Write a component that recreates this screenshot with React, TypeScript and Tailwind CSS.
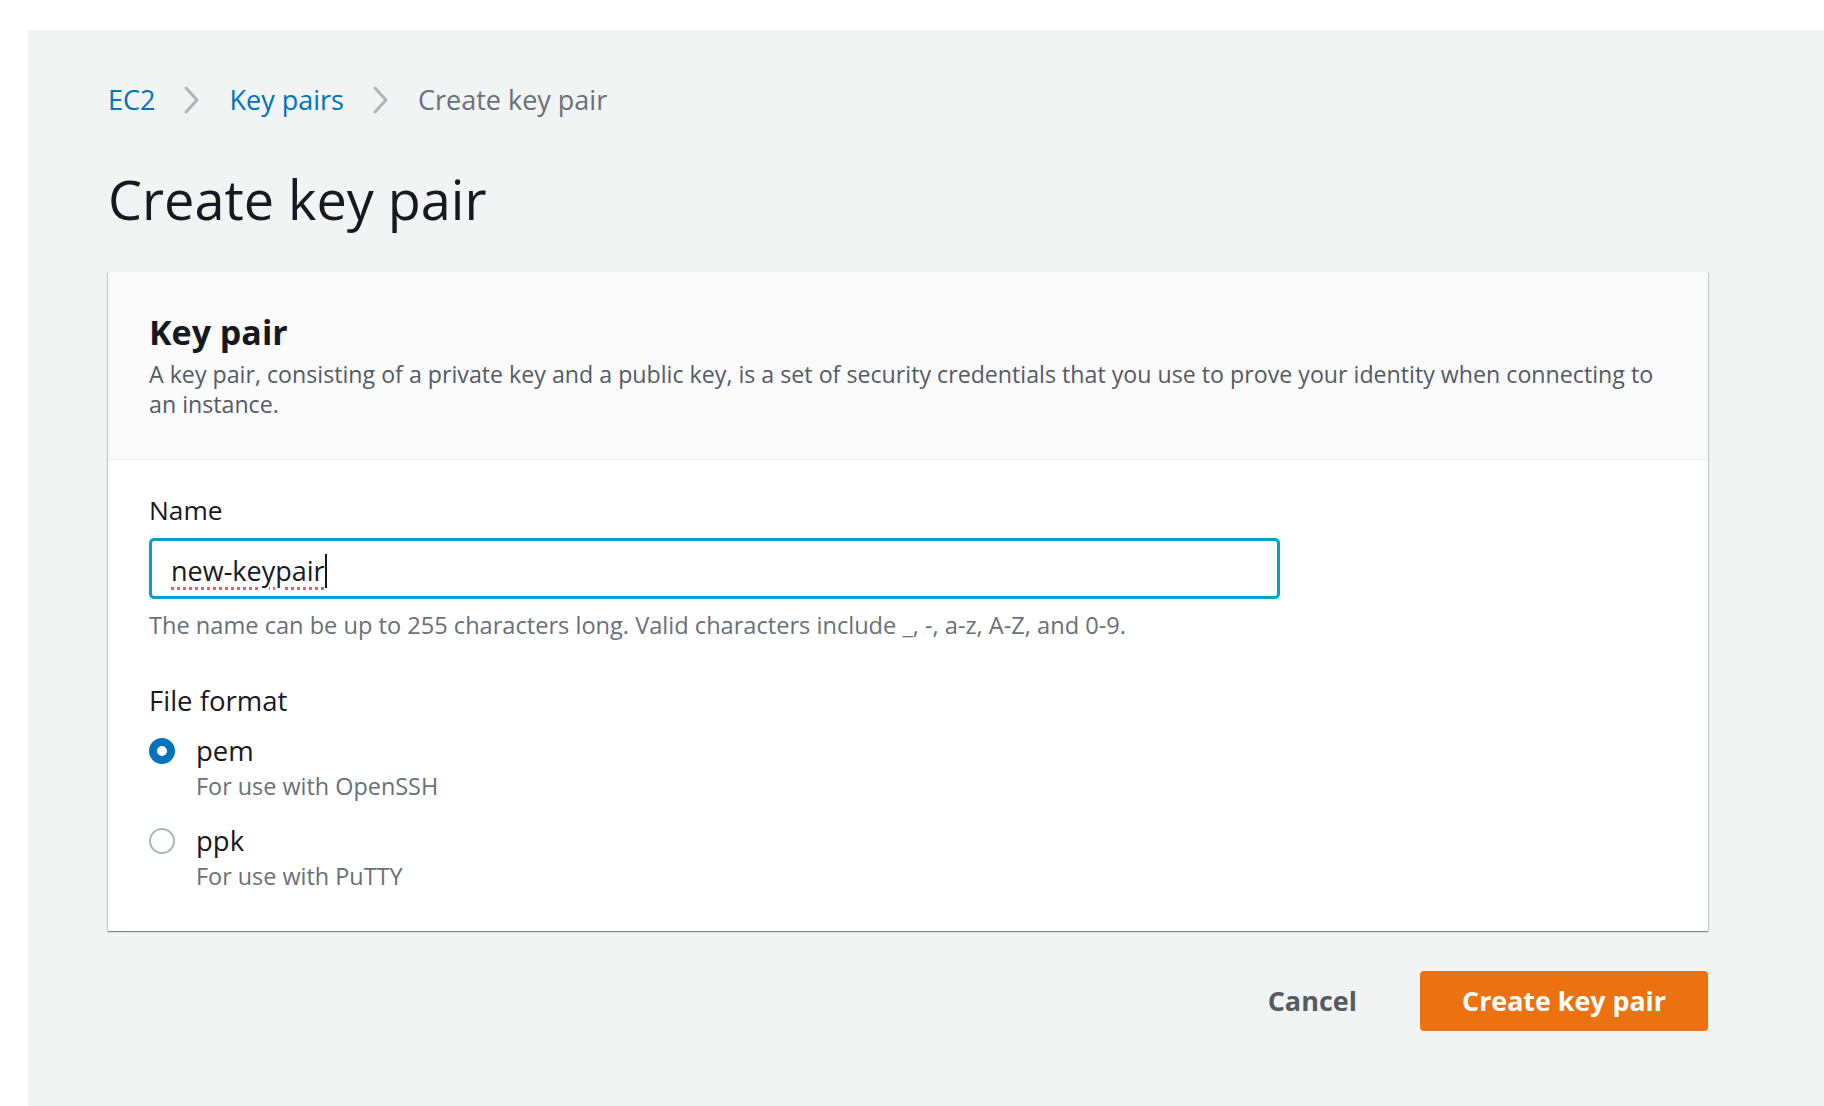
import React from "react";

const Chevron = () => (
  <svg width="18" height="30" viewBox="0 0 18 30" fill="none" className="shrink-0">
    <path d="M3 3 L14 15 L3 27" stroke="#aab7b8" strokeWidth="3" strokeLinecap="round" strokeLinejoin="round" />
  </svg>
);

const Radio = ({ checked }: { checked?: boolean }) =>
  checked ? (
    <div className="w-[26px] h-[26px] rounded-full border-[8px] border-[#0073bb] bg-white shrink-0" />
  ) : (
    <div className="w-[26px] h-[26px] rounded-full border-[2.5px] border-[#aab7b8] bg-white shrink-0" />
  );

const Option = ({ label, desc, checked }: { label: string; desc: string; checked?: boolean }) => (
  <div className="flex gap-[21px]">
    <div className="h-[36px] flex items-center">
      <Radio checked={checked} />
    </div>
    <div>
      <div className="text-[27.5px] leading-[36px] text-[#16191f]">{label}</div>
      <div className="text-[23.4px] leading-[30px] text-[#687078] mt-[2px]">{desc}</div>
    </div>
  </div>
);

const App = () => {
  return (
    <div className="min-h-screen bg-white pt-[30px] pl-[28px] font-['Open_Sans',sans-serif]">
      <div className="bg-[#f2f3f3] h-[1076px] pt-[50px] pl-[80px] pr-[116px]">
        {/* breadcrumb */}
        <div className="flex items-center gap-[28px] h-[40px] text-[27px]">
          <span className="text-[#0073bb]">EC2</span>
          <Chevron />
          <span className="text-[#0073bb]">Key pairs</span>
          <Chevron />
          <span className="text-[#687078]">Create key pair</span>
        </div>

        <h1 className="mt-[47px] text-[54px] leading-[64px] text-[#16191f]">Create key pair</h1>

        {/* card */}
        <div className="mt-[41px] bg-white shadow-[0_1px_1px_0_rgba(0,28,36,0.3),1px_1px_1px_0_rgba(0,28,36,0.15),-1px_1px_1px_0_rgba(0,28,36,0.15)]">
          <div className="bg-[#fafafa] border-b border-[#eaeded] pl-[41px] pr-[30px] pt-[38px] pb-[40px]">
            <h2 className="text-[34px] leading-[44px] font-bold text-[#16191f]">Key pair</h2>
            <p className="mt-[5px] text-[23.2px] leading-[30px] text-[#545b64]">
              A key pair, consisting of a private key and a public key, is a set of security credentials that you use to prove your identity when connecting to an instance.
            </p>
          </div>

          <div className="px-[41px] pt-[32px] pb-[40px]">
            <div className="text-[26.3px] leading-[36px] text-[#16191f]">Name</div>
            <div className="mt-[10px] w-[1131px] h-[61px] border-[3px] border-[#00a1c9] rounded-[5px] flex items-center pl-[19px]">
              <span className="mt-[4px] text-[27px] leading-[36px] text-[#16191f] underline decoration-dotted decoration-[#f25c54] decoration-[3px] underline-offset-[6px]">
                new-keypair
              </span>
              <span className="mt-[4px] w-[2px] h-[34px] bg-[#16191f]" />
            </div>
            <div className="mt-[11px] text-[23.6px] leading-[30px] text-[#687078]">
              The name can be up to 255 characters long. Valid characters include _, -, a-z, A-Z, and 0-9.
            </div>

            <div className="mt-[43px] text-[27.5px] leading-[36px] text-[#16191f]">File format</div>
            <div className="mt-[14px] flex flex-col gap-[22px]">
              <Option label="pem" desc="For use with OpenSSH" checked />
              <Option label="ppk" desc="For use with PuTTY" />
            </div>
          </div>
        </div>

        {/* actions */}
        <div className="mt-[40px] flex justify-end items-center gap-[63px]">
          <button className="text-[27px] font-bold text-[#545b64]">Cancel</button>
          <button className="w-[288px] h-[60px] rounded-[4px] bg-[#ec7211] text-white text-[26.8px] font-bold">
            Create key pair
          </button>
        </div>
      </div>
    </div>
  );
};

export default App;
